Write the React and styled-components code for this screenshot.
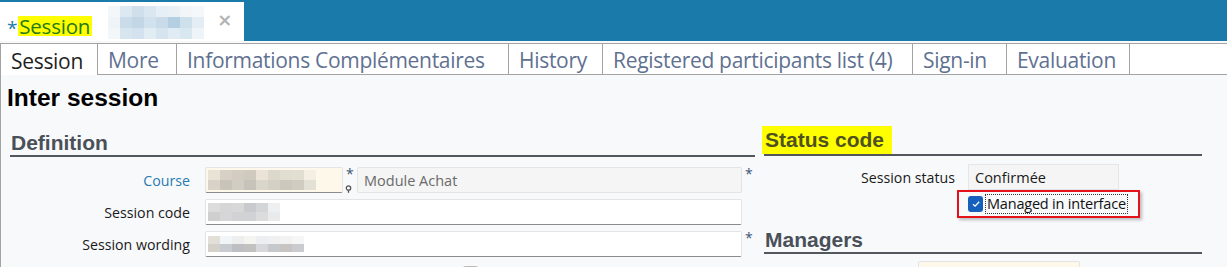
import React from 'react';
import styled, { createGlobalStyle } from 'styled-components';

const GlobalStyle = createGlobalStyle`
  html, body {
    margin: 0;
    padding: 0;
    background: #f8f9fb;
  }
  body {
    font-family: "Open Sans", "Noto Sans", sans-serif;
  }
`;

const tabs = [
  { label: 'Session', width: 97, active: true },
  { label: 'More', width: 79 },
  { label: 'Informations Complémentaires', width: 332 },
  { label: 'History', width: 94 },
  { label: 'Registered participants list (4)', width: 310 },
  { label: 'Sign-in', width: 94 },
  { label: 'Evaluation', width: 124 },
];

const blurTitle = [
  ['#f3f7fa', '#dde9f2', '#cfe0ec', '#dae7f0', '#e6eff5', '#eaf1f6', '#f2f6f9', '#f5f8fb'],
  ['#eef4f8', '#cadcea', '#c2d6e6', '#d1e1ed', '#c9dbe9', '#b5cfe2', '#cee0ec', '#e4edf4'],
  ['#f3f7fa', '#d7e5ef', '#d3e2ee', '#e2ecf3', '#d5e4ef', '#e1ebf3', '#d9e7f1', '#eef4f8'],
];

const blurCourse = [
  ['#e9e3d6', '#d6d0c6', '#d2ccc1', '#cfcac0', '#ebe4d6', '#dcd8cc', '#e0ddd1', '#e2dfd2', '#f4efe2'],
  ['#d8d2c8', '#c9c4ba', '#d2cdc2', '#c8c3ba', '#d9d6cb', '#d4d0c5', '#ccc8be', '#d0ccc2', '#e3e1d5'],
];

const blurCode = [
  ['#dcdcdc', '#d6d6d8', '#d8d8d8', '#c9cacd', '#d4d5d7', '#eeeff1'],
  ['#cfcfcf', '#d6d6d8', '#d2d2d4', '#d1d2d5', '#dcdcdc', '#e9eaec'],
];

const blurWording = [
  ['#e2ded8', '#f2f5f8', '#eeeeee', '#f4f4f0', '#eceef2', '#f0f0f0', '#f2f2f2', '#f6f6f6'],
  ['#d4d0ca', '#c8cbd0', '#bebfc3', '#c3c0c0', '#d8d8da', '#c6c8cc', '#c8c4c4', '#c9cbcf'],
];

const Blur = ({ rows, cellWidth, cellHeight }) => (
  <BlurGrid>
    {rows.map((row, i) => (
      <BlurRow key={i}>
        {row.map((color, j) => (
          <BlurCell key={j} $w={cellWidth} $h={cellHeight} $c={color} />
        ))}
      </BlurRow>
    ))}
  </BlurGrid>
);

const PinIcon = () => (
  <svg width="7" height="8" viewBox="0 0 7 8">
    <circle cx="3.5" cy="3" r="2.2" fill="none" stroke="#555" strokeWidth="1.3" />
    <path d="M3.5 5.2 L3.5 7.8" stroke="#555" strokeWidth="1.3" />
  </svg>
);

const CheckIcon = () => (
  <svg width="10" height="10" viewBox="0 0 10 10">
    <path d="M2 5.2 L4.1 7.2 L8.2 2.8" fill="none" stroke="#fff" strokeWidth="1.3" />
  </svg>
);

const App = () => (
  <Page>
    <GlobalStyle />
    <TopBar>
      <DocTab>
        <Star>*</Star>
        <Highlight $tab>Session</Highlight>
        <TitleBlur>
          <Blur rows={blurTitle} cellWidth={12} cellHeight={11} />
        </TitleBlur>
        <Close>×</Close>
      </DocTab>
    </TopBar>

    <TabStrip>
      {tabs.map(tab => (
        <Tab key={tab.label} $w={tab.width} $active={tab.active}>
          {tab.label}
        </Tab>
      ))}
    </TabStrip>

    <Content>
      <Title>Inter session</Title>
      <Columns>
        <LeftColumn>
          <SectionTitle>
            <span>Definition</span>
          </SectionTitle>
          <Form>
            <FieldRow>
              <Label $link>Course</Label>
              <FieldGroup>
                <Input $w={138} $cream>
                  <Blur rows={blurCourse} cellWidth={12} cellHeight={10} />
                </Input>
                <Marker>
                  <Asterisk>*</Asterisk>
                  <PinIcon />
                </Marker>
                <Input $grey>Module Achat</Input>
              </FieldGroup>
              <Asterisk>*</Asterisk>
            </FieldRow>
            <FieldRow>
              <Label>Session code</Label>
              <FieldGroup>
                <Input>
                  <Blur rows={blurCode} cellWidth={12} cellHeight={9} />
                </Input>
              </FieldGroup>
              <span />
            </FieldRow>
            <FieldRow>
              <Label>Session wording</Label>
              <FieldGroup>
                <Input>
                  <Blur rows={blurWording} cellWidth={12} cellHeight={8} />
                </Input>
              </FieldGroup>
              <Asterisk>*</Asterisk>
            </FieldRow>
            <FieldRow>
              <span />
              <FieldGroup>
                <SmallBox />
              </FieldGroup>
              <span />
            </FieldRow>
          </Form>
        </LeftColumn>

        <RightColumn>
          <SectionTitle>
            <Highlight>Status code</Highlight>
          </SectionTitle>
          <StatusRow>
            <Label>Session status</Label>
            <ReadOnlyValue>Confirmée</ReadOnlyValue>
          </StatusRow>
          <CheckRow>
            <RedFrame>
              <CheckBox>
                <CheckIcon />
              </CheckBox>
              <CheckLabel>Managed in interface</CheckLabel>
            </RedFrame>
          </CheckRow>
          <SectionTitle $tight>
            <span>Managers</span>
          </SectionTitle>
          <ManagerRow>
            <Input $w={162} $cream />
          </ManagerRow>
        </RightColumn>
      </Columns>
    </Content>
  </Page>
);

const Page = styled.div`
  width: 1227px;
  height: 267px;
  overflow: hidden;
`;

const TopBar = styled.div`
  height: 41px;
  padding-top: 2px;
  box-sizing: border-box;
  background: #1a7aaa;
  display: flex;
`;

const DocTab = styled.div`
  width: 244px;
  height: 39px;
  background: #fff;
  display: flex;
  align-items: center;
  padding: 9px 0 0 7px;
  box-sizing: border-box;
  font-size: 20.5px;
  letter-spacing: -0.2px;
`;

const Star = styled.span`
  color: #1a7aaa;
  font-size: 19px;
  margin-right: 1px;
  align-self: flex-start;
  margin-top: 4px;
`;

const Highlight = styled.span`
  background: #ffff00;
  color: ${p => (p.$tab ? '#237a14' : '#4f5220')};
  padding: ${p => (p.$tab ? '0 2px 0 1px' : '0 8px 0 3px')};
  line-height: ${p => (p.$tab ? '20px' : '28px')};
  display: inline-block;
  margin-left: ${p => (p.$tab ? '0' : '-3px')};
`;

const TitleBlur = styled.div`
  margin-left: 16px;
  margin-top: -8px;
`;

const Close = styled.span`
  margin-left: 13px;
  margin-top: -13px;
  color: #b3b3b3;
  font-family: "DejaVu Sans", sans-serif;
  font-size: 18px;
  font-weight: bold;
`;

const BlurGrid = styled.div`
  display: flex;
  flex-direction: column;
`;

const BlurRow = styled.div`
  display: flex;
`;

const BlurCell = styled.span`
  width: ${p => p.$w}px;
  height: ${p => p.$h}px;
  background: ${p => p.$c};
`;

const TabStrip = styled.div`
  margin-top: 2px;
  height: 32px;
  box-sizing: border-box;
  border-top: 1px solid #a3a3a3;
  border-bottom: 1px solid #a3a3a3;
  background: #fff;
  display: flex;
`;

const Tab = styled.div`
  width: ${p => p.$w}px;
  box-sizing: border-box;
  border-left: 1px solid #a3a3a3;
  display: flex;
  align-items: center;
  padding: 2px 0 0 10px;
  font-size: 21px;
  letter-spacing: -0.3px;
  white-space: nowrap;
  color: ${p => (p.$active ? '#1f1f1f' : '#5f7191')};
  height: ${p => (p.$active ? '31px' : '30px')};
  background: #fff;
  &:last-child {
    border-right: 1px solid #a3a3a3;
  }
  ${p => p.$active && 'position: relative; z-index: 1;'}
`;

const Content = styled.div`
  border-left: 1px solid #a3a3a3;
  padding: 9px 0 0 6px;
`;

const Title = styled.h1`
  margin: 0;
  font-family: "Liberation Sans", Arial, sans-serif;
  font-weight: bold;
  font-size: 24.5px;
  line-height: 28px;
  color: #000;
`;

const Columns = styled.div`
  display: flex;
  gap: 9px;
  padding-left: 3px;
  margin-top: 16px;
`;

const LeftColumn = styled.div`
  width: 745px;
`;

const RightColumn = styled.div`
  width: 438px;
  margin-top: -1px;
`;

const SectionTitle = styled.h2`
  margin: 0;
  padding: 0 0 0 1px;
  height: ${p => (p.$tight ? '34px' : '27px')};
  display: flex;
  align-items: flex-end;
  border-bottom: 2px solid #52575e;
  font-family: "Liberation Sans", Arial, sans-serif;
  font-weight: bold;
  font-size: 21px;
  line-height: 24px;
  color: #4a5058;
`;

const Form = styled.div`
  display: flex;
  flex-direction: column;
  gap: 6px;
  margin-top: 10px;
`;

const FieldRow = styled.div`
  display: grid;
  grid-template-columns: 195px 537px 13px;
  align-items: center;
`;

const Label = styled.label`
  text-align: right;
  padding-right: 15px;
  font-size: 14.2px;
  color: ${p => (p.$link ? '#2a7ab0' : '#1a1a1a')};
`;

const FieldGroup = styled.div`
  display: flex;
  align-items: center;
`;

const Input = styled.div`
  ${p => (p.$w ? `width: ${p.$w}px;` : 'flex: 1;')}
  height: 26px;
  box-sizing: border-box;
  border: 1px solid #e4e4e4;
  border-bottom-color: ${p => (p.$grey ? '#e4e4e4' : '#8c8c8c')};
  border-radius: 2px;
  background: ${p => (p.$cream ? '#fdf8ea' : p.$grey ? '#f5f5f5' : '#fff')};
  display: flex;
  align-items: center;
  padding-left: ${p => (p.$grey ? '6px' : '2px')};
  font-size: 14.5px;
  color: #6a6a6a;
`;

const Marker = styled.div`
  width: 14px;
  height: 26px;
  display: flex;
  flex-direction: column;
  align-items: center;
  justify-content: space-between;
  padding-right: 3px;
  box-sizing: border-box;
`;

const Asterisk = styled.span`
  color: #3b5577;
  font-size: 14px;
  line-height: 14px;
  padding-left: 3px;
  align-self: flex-start;
`;

const SmallBox = styled.div`
  width: 15px;
  height: 6px;
  margin-left: 257px;
  margin-top: 3px;
  border: 1px solid #b8b8b8;
  border-bottom: none;
  border-radius: 4px 4px 0 0;
`;

const StatusRow = styled.div`
  display: grid;
  grid-template-columns: 204px 151px;
  align-items: center;
  margin-top: 8px;
  & > label {
    padding-right: 13px;
  }
`;

const ReadOnlyValue = styled.div`
  height: 26px;
  box-sizing: border-box;
  border: 1px solid #e6e6e6;
  background: #f5f5f5;
  display: flex;
  align-items: center;
  padding-left: 6px;
  font-size: 14.5px;
  color: #1a1a1a;
`;

const CheckRow = styled.div`
  display: flex;
  padding-left: 193px;
`;

const RedFrame = styled.div`
  width: 183px;
  height: 28px;
  box-sizing: border-box;
  border: 2px solid #e5121b;
  box-shadow: 2px 2px 3px rgba(0, 0, 0, 0.25);
  display: flex;
  align-items: center;
  padding-left: 9px;
  gap: 3px;
`;

const CheckBox = styled.span`
  width: 15px;
  height: 16px;
  border-radius: 3px;
  background: #1560bd;
  display: flex;
  align-items: center;
  justify-content: center;
`;

const CheckLabel = styled.span`
  outline: 1px dotted #333;
  font-size: 14.5px;
  letter-spacing: -0.2px;
  line-height: 18px;
  padding: 0 1px;
  color: #111;
`;

const ManagerRow = styled.div`
  padding-left: 154px;
  margin-top: 7px;
`;

export default App;
